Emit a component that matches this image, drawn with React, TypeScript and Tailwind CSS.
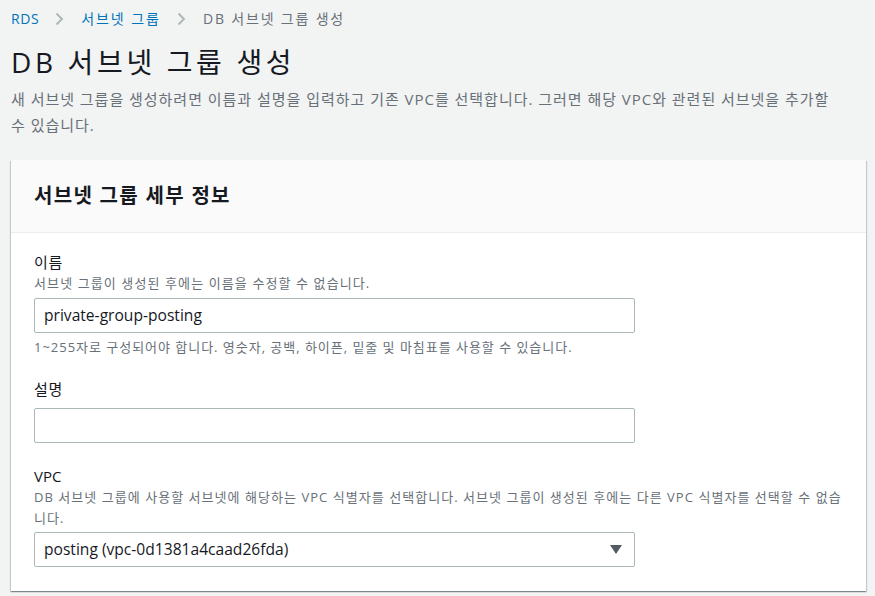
export default function App() {
  const font = { fontFamily: '"Open Sans", "Noto Sans CJK KR", sans-serif' }
  const chevron = (
    <svg width="9" height="14" viewBox="0 0 9 14" className="ml-[16px] mr-[17px] shrink-0">
      <polyline points="1.5,1.5 7,7 1.5,12.5" fill="none" stroke="#aab7b8" strokeWidth="1.8" />
    </svg>
  )

  return (
    <div className="min-h-[596px] w-[875px] bg-[#f2f3f3] pl-[11px] pr-[9px] pt-[9px]" style={font}>
      {/* Breadcrumb */}
      <nav className="flex h-5 items-center text-[14px] leading-5">
        <span className="tracking-[0.04em] text-[#0073bb]">RDS</span>
        {chevron}
        <span className="tracking-[0.14em] text-[#0073bb]">서브넷 그룹</span>
        {chevron}
        <span className="tracking-[0.13em] text-[#687078]">DB 서브넷 그룹 생성</span>
      </nav>

      {/* Header */}
      <h1 className="mt-[15px] text-[28px] font-normal leading-9 tracking-[0.13em] text-[#16191f]">DB 서브넷 그룹 생성</h1>
      <p className="mt-[6px] pr-[24px] text-[15px] leading-[26px] tracking-[0.065em] text-[#687078]">
        새 서브넷 그룹을 생성하려면 이름과 설명을 입력하고 기존 VPC를 선택합니다. 그러면 해당 VPC와 관련된 서브넷을 추가할 수 있습니다.
      </p>

      {/* Card */}
      <div className="mt-[22px] w-[855px] bg-white shadow-[0_1px_1px_0_rgba(0,28,36,0.3),1px_1px_1px_0_rgba(0,28,36,0.15),-1px_1px_1px_0_rgba(0,28,36,0.15)]">
        <div className="flex h-[73px] items-center border-b border-[#eaeded] bg-[#fafafa] px-[23px]">
          <h2 className="text-[20px] font-bold tracking-[0.065em] text-[#16191f]">서브넷 그룹 세부 정보</h2>
        </div>

        <div className="px-[23px] pb-[24px] pt-[18px]">
          {/* Name */}
          <div>
            <div className="text-[15px] leading-[22px] tracking-[0.05em] text-[#16191f]">이름</div>
            <div className="text-[13px] leading-5 tracking-[0.085em] text-[#687078]">서브넷 그룹이 생성된 후에는 이름을 수정할 수 없습니다.</div>
            <div className="mt-[5px] flex h-[35px] w-[601px] items-center rounded-[2px] border border-[#aab7b8] px-[9px] text-[15.6px] text-[#16191f]">
              private-group-posting
            </div>
            <div className="mt-[4px] text-[13px] leading-5 tracking-[0.075em] text-[#687078]">
              1~255자로 구성되어야 합니다. 영숫자, 공백, 하이픈, 밑줄 및 마침표를 사용할 수 있습니다.
            </div>
          </div>

          {/* Description */}
          <div className="mt-[21px]">
            <div className="text-[15px] leading-[22px] tracking-[0.05em] text-[#16191f]">설명</div>
            <div className="mt-[8px] h-[35px] w-[601px] rounded-[2px] border border-[#aab7b8]" />
          </div>

          {/* VPC */}
          <div className="mt-[22px]">
            <div className="text-[15px] leading-[22px] text-[#16191f]">VPC</div>
            <div className="text-[13px] leading-[21px] tracking-[0.08em] text-[#687078]">
              DB 서브넷 그룹에 사용할 서브넷에 해당하는 VPC 식별자를 선택합니다. 서브넷 그룹이 생성된 후에는 다른 VPC 식별자를 선택할 수 없습니다.
            </div>
            <div className="mt-[3px] flex h-[35px] w-[601px] items-center justify-between rounded-[2px] border border-[#aab7b8] pl-[9px] pr-[12px] text-[15.6px] text-[#16191f]">
              <span>posting (vpc-0d1381a4caad26fda)</span>
              <svg width="12" height="9" viewBox="0 0 12 9">
                <polygon points="0,0 12,0 6,9" fill="#545b64" />
              </svg>
            </div>
          </div>
        </div>
      </div>
    </div>
  )
}
